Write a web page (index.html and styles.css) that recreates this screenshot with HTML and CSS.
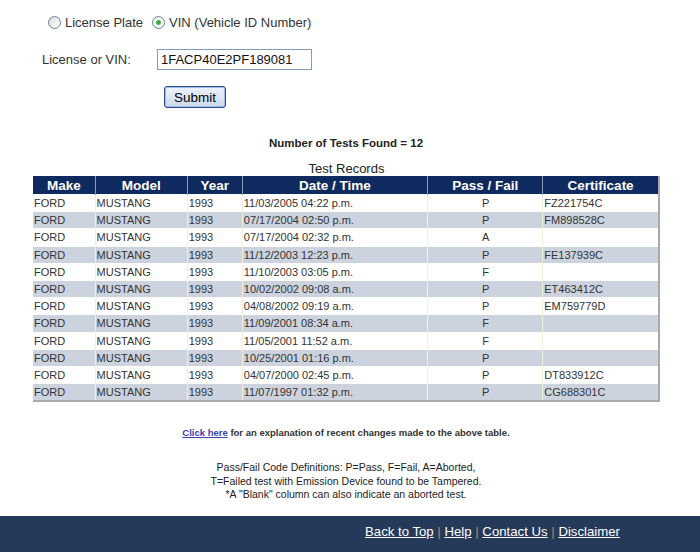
FILE: index.html
```html
<!DOCTYPE html>
<html lang="en">
<head>
    <meta charset="UTF-8">
    <title>Vehicle Test History</title>
    <link rel="stylesheet" href="styles.css">
</head>
<body>
    <div class="page">
        <form class="search">
            <div class="choice">
                <label><input type="radio" name="type"> License Plate</label>
                <label><input type="radio" name="type" checked> VIN (Vehicle ID Number)</label>
            </div>
            <div class="field">
                <label for="vin">License or VIN:</label>
                <input type="text" id="vin" value="1FACP40E2PF189081">
            </div>
            <div class="actions">
                <button type="button">Submit</button>
            </div>
        </form>

        <p class="found">Number of Tests Found = 12</p>

        <table class="records">
            <caption>Test Records</caption>
            <colgroup>
                <col class="c-make">
                <col class="c-model">
                <col class="c-year">
                <col class="c-date">
                <col class="c-pass">
                <col class="c-cert">
            </colgroup>
            <thead>
                <tr>
                    <th>Make</th>
                    <th>Model</th>
                    <th>Year</th>
                    <th>Date / Time</th>
                    <th>Pass / Fail</th>
                    <th>Certificate</th>
                </tr>
            </thead>
            <tbody>
                <tr><td>FORD</td><td>MUSTANG</td><td>1993</td><td>11/03/2005 04:22 p.m.</td><td class="mid">P</td><td>FZ221754C</td></tr>
                <tr><td>FORD</td><td>MUSTANG</td><td>1993</td><td>07/17/2004 02:50 p.m.</td><td class="mid">P</td><td>FM898528C</td></tr>
                <tr><td>FORD</td><td>MUSTANG</td><td>1993</td><td>07/17/2004 02:32 p.m.</td><td class="mid">A</td><td></td></tr>
                <tr><td>FORD</td><td>MUSTANG</td><td>1993</td><td>11/12/2003 12:23 p.m.</td><td class="mid">P</td><td>FE137939C</td></tr>
                <tr><td>FORD</td><td>MUSTANG</td><td>1993</td><td>11/10/2003 03:05 p.m.</td><td class="mid">F</td><td></td></tr>
                <tr><td>FORD</td><td>MUSTANG</td><td>1993</td><td>10/02/2002 09:08 a.m.</td><td class="mid">P</td><td>ET463412C</td></tr>
                <tr><td>FORD</td><td>MUSTANG</td><td>1993</td><td>04/08/2002 09:19 a.m.</td><td class="mid">P</td><td>EM759779D</td></tr>
                <tr><td>FORD</td><td>MUSTANG</td><td>1993</td><td>11/09/2001 08:34 a.m.</td><td class="mid">F</td><td></td></tr>
                <tr><td>FORD</td><td>MUSTANG</td><td>1993</td><td>11/05/2001 11:52 a.m.</td><td class="mid">F</td><td></td></tr>
                <tr><td>FORD</td><td>MUSTANG</td><td>1993</td><td>10/25/2001 01:16 p.m.</td><td class="mid">P</td><td></td></tr>
                <tr><td>FORD</td><td>MUSTANG</td><td>1993</td><td>04/07/2000 02:45 p.m.</td><td class="mid">P</td><td>DT833912C</td></tr>
                <tr><td>FORD</td><td>MUSTANG</td><td>1993</td><td>11/07/1997 01:32 p.m.</td><td class="mid">P</td><td>CG688301C</td></tr>
            </tbody>
        </table>

        <p class="changes"><a href="#">Click here</a> for an explanation of recent changes made to the above table.</p>

        <p class="codes">
            Pass/Fail Code Definitions: P=Pass, F=Fail, A=Aborted,<br>
            T=Failed test with Emission Device found to be Tampered.<br>
            *A "Blank" column can also indicate an aborted test.
        </p>
    </div>

    <div class="footer">
        <a href="#">Back to Top</a> <span class="sep">|</span>
        <a href="#">Help</a> <span class="sep">|</span>
        <a href="#">Contact Us</a> <span class="sep">|</span>
        <a href="#">Disclaimer</a>
    </div>
</body>
</html>
```

FILE: styles.css
```css
body {
    font-family: Arial, "Liberation Sans", sans-serif;
    background-color: #fff;
    color: #333;
    margin: 0;
    padding: 0;
}
.page {
    width: 692px;
    height: 516px;
    overflow: hidden;
}
.search {
    padding-top: 12px;
    font-size: 13px;
    color: #333;
}
.choice {
    padding-left: 48px;
    height: 20px;
    display: flex;
    align-items: center;
    gap: 9px;
}
.choice label {
    display: flex;
    align-items: center;
    gap: 4px;
}
.choice input {
    appearance: none;
    width: 13px;
    height: 13px;
    margin: 0;
    border: 1px solid #6d7e96;
    border-radius: 50%;
    background: linear-gradient(135deg, #dcdcd6, #fff);
}
.choice input:checked {
    background: radial-gradient(circle, #2e9a2e 0, #4cb84c 2px, #fff 3px, #ececea 100%);
}
.field {
    margin-top: 17px;
    padding-left: 42px;
    display: flex;
    align-items: center;
}
.field label {
    width: 115px;
}
.field input {
    width: 155px;
    height: 21px;
    box-sizing: border-box;
    border: 1px solid #7f9db9;
    padding: 0 3px;
    font-family: Arial, "Liberation Sans", sans-serif;
    font-size: 13px;
    color: #111;
}
.actions {
    margin-top: 16px;
    padding-left: 164px;
}
.actions button {
    width: 62px;
    height: 22px;
    font-family: Arial, "Liberation Sans", sans-serif;
    font-size: 13.5px;
    color: #000;
    background: linear-gradient(#eef3fb, #c9d9ee);
    border: 1px solid #2b4d88;
    border-radius: 3px;
    box-shadow: inset 0 0 0 1px #9fbbe6;
    padding: 0;
}
.found {
    margin: 29px 0 0;
    text-align: center;
    font-size: 11.5px;
    font-weight: bold;
    color: #222;
}
.records {
    margin: 12px 0 0 33px;
    width: 627px;
    table-layout: fixed;
    border-collapse: collapse;
    font-size: 11px;
    border-right: 2px solid #a9a9a9;
    border-bottom: 2px solid #a9a9a9;
}
.records caption {
    font-size: 13px;
    line-height: 15px;
    color: #222;
    padding: 0;
}
.records th {
    background-color: #0f2a5e;
    color: #fff;
    font-size: 13.5px;
    font-weight: bold;
    height: 18px;
    padding: 0;
    border-left: 1px solid #8d9cb8;
}
.records td {
    height: 16.2px;
    padding: 0 0 0 1px;
    border-left: 1px solid #f2eee0;
    border-top: 1px solid #fff;
    color: #333;
    white-space: nowrap;
}
.records th:first-child,
.records td:first-child {
    border-left: none;
}
.records tbody tr:nth-child(even) td {
    background-color: #ccd3df;
}
.records .mid {
    text-align: center;
}
.c-make { width: 62px; }
.c-model { width: 92px; }
.c-year { width: 55px; }
.c-date { width: 185px; }
.c-pass { width: 115px; }
.c-cert { width: 116px; }
.changes {
    margin: 25px 0 0;
    text-align: center;
    font-size: 9.5px;
    font-weight: bold;
    color: #333;
}
.changes a {
    color: #3c44b0;
}
.codes {
    margin: 23px 0 0;
    text-align: center;
    font-size: 10.5px;
    line-height: 13.5px;
    color: #222;
}
.footer {
    background-color: #253a5a;
    height: 36px;
    box-sizing: border-box;
    padding: 8px 0 0 365px;
    font-size: 13.2px;
    color: #fff;
}
.footer a {
    color: #fff;
}
.footer .sep {
    color: #c0805a;
}
```
